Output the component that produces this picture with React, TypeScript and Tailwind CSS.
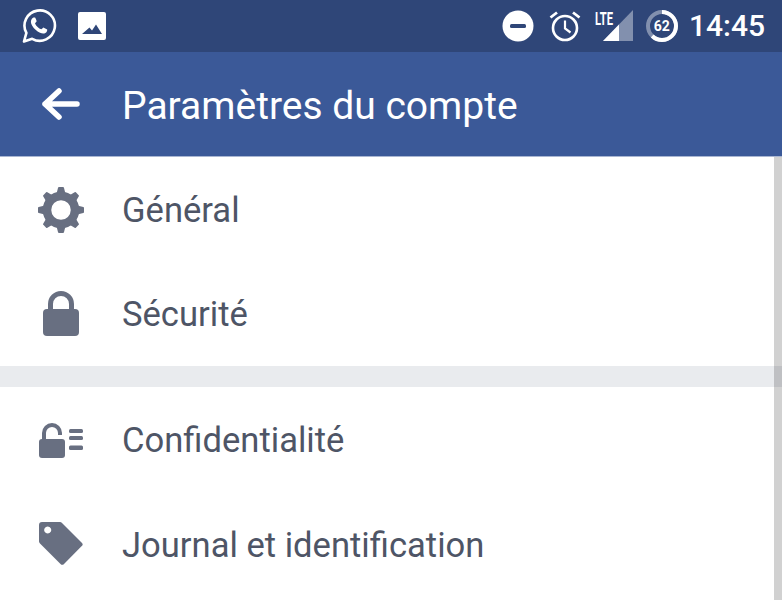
const slate = "#686f81";

function Whatsapp() {
  return (
    <svg viewBox="0 0 36 36" className="h-9 w-9" fill="none">
      <path d="M3 33.5l2.4-8.6A15.2 15.2 0 1 1 11.2 30.8z" stroke="white" strokeWidth="2.6" strokeLinejoin="round" />
      <path d="M13.2 9.6c-.8 0-1.6.3-2.3 1.2-1.4 1.8-1.3 4.4.3 7 1.8 3 4.6 5.6 7.8 7 2.7 1.1 5 .9 6.4-.6.7-.8.9-1.8.8-2.6-1.2-.9-2.6-1.7-3.9-2.2-.7.6-1.2 1.5-2 1.9-2.7-1-5-3.2-6.3-5.9.5-.8 1.3-1.4 1.7-2.1-.4-1.3-1-2.6-1.6-3.7z" fill="white" />
    </svg>
  );
}

function Picture() {
  return (
    <svg viewBox="0 0 28 28" className="h-7 w-7">
      <path fillRule="evenodd" fill="white" d="M2 0h24a2 2 0 0 1 2 2v24a2 2 0 0 1-2 2H2a2 2 0 0 1-2-2V2a2 2 0 0 1 2-2zM4 22h20l-6-9.5-4 6-2.5-3z" />
    </svg>
  );
}

function Dnd() {
  return (
    <svg viewBox="0 0 32 32" className="h-8 w-8">
      <circle cx="16" cy="16" r="15.5" fill="white" />
      <rect x="8" y="14" width="16" height="4" rx="1.5" fill="#2f4678" />
    </svg>
  );
}

function Alarm() {
  return (
    <svg viewBox="0 0 32 32" className="h-8 w-8" fill="none" stroke="white">
      <circle cx="16" cy="18" r="12" strokeWidth="2.6" />
      <path d="M16 10.5v8l5.5 4" strokeWidth="2.2" />
      <path d="M1.5 7.5L8 2.5M30.500 7.500L24 2.500" strokeWidth="2.8" />
    </svg>
  );
}

function Signal() {
  return (
    <div className="relative h-8 w-[30px]">
      <svg viewBox="0 0 30 32" className="h-8 w-[30px]">
        <path d="M30 0v31H0z" fill="white" fillOpacity="0.4" />
        <path d="M16 14.5V31H0z" fill="white" />
      </svg>
      <span className="absolute top-0 left-[-8px] origin-left scale-x-[0.62] text-[18px] leading-none font-bold text-white">
        LTE
      </span>
    </div>
  );
}

function Battery() {
  return (
    <div className="relative flex h-8 w-8 items-center justify-center">
      <svg viewBox="0 0 32 32" className="absolute inset-0 h-8 w-8" fill="none" strokeWidth="4">
        <circle cx="16" cy="16" r="14" stroke="white" strokeOpacity="0.4" />
        <circle cx="16" cy="16" r="14" stroke="white" strokeDasharray="54.5 88" transform="rotate(-90 16 16)" />
      </svg>
      <span className="relative text-[14px] leading-none font-bold text-white">62</span>
    </div>
  );
}

function Back() {
  return (
    <svg viewBox="0 0 40 32" className="h-8 w-10" fill="none" stroke="white" strokeWidth="5.5" strokeLinecap="round" strokeLinejoin="round">
      <path d="M36 16H4M18 3L4 16l14 13" />
    </svg>
  );
}

function Gear() {
  const teeth = [0, 45, 90, 135, 180, 225, 270, 315];
  return (
    <svg viewBox="0 0 48 48" className="h-12 w-12">
      {teeth.map((a) => (
        <path
          key={a}
          d="M19.500 12L22 2h4l2.500 10z"
          fill={slate}
          stroke={slate}
          strokeWidth="2"
          strokeLinejoin="round"
          transform={`rotate(${a} 24 24)`}
        />
      ))}
      <circle cx="24" cy="24" r="14" fill="none" stroke={slate} strokeWidth="8.500" />
    </svg>
  );
}

function Lock() {
  return (
    <svg viewBox="0 0 36 45" className="h-[45px] w-9">
      <path d="M7.500 20v-7a10.500 10.500 0 0 1 21 0v7" fill="none" stroke={slate} strokeWidth="5" />
      <rect x="0" y="18" width="36" height="27" rx="4" fill={slate} />
    </svg>
  );
}

function PrivacyLock() {
  return (
    <svg viewBox="0 0 44 35" className="h-[35px] w-11">
      <path d="M5 17v-7a8 8 0 0 1 16 0v2" fill="none" stroke={slate} strokeWidth="4" />
      <rect x="0" y="16" width="26" height="19" rx="3" fill={slate} />
      <rect x="30" y="6" width="14" height="4" rx="1.500" fill={slate} />
      <rect x="30" y="13" width="14" height="4" rx="1.500" fill={slate} />
      <rect x="30" y="22.500" width="14" height="4.500" rx="1.500" fill={slate} />
    </svg>
  );
}

function Tag() {
  return (
    <svg viewBox="0 0 44 43" className="h-[43px] w-11">
      <path
        fillRule="evenodd"
        fill={slate}
        d="M3 0h18a3 3 0 0 1 2 1l20 20a2 2 0 0 1 0 2.800L25 42a2.500 2.500 0 0 1-3.500 0L1 21.500a3 3 0 0 1-1-2V3a3 3 0 0 1 3-3zM8.700 4.500a3.500 3.500 0 1 0 .01 0z"
      />
    </svg>
  );
}

function Row({ icon, label, className }: { icon: React.ReactNode; label: string; className: string }) {
  return (
    <div className={`flex items-center ${className}`}>
      <div className="flex w-[122px] shrink-0 items-center justify-center">{icon}</div>
      <span className="text-[34.6px] leading-10 text-[#4e5566]">{label}</span>
    </div>
  );
}

export default function App() {
  return (
    <div className="relative h-[600px] w-[782px] overflow-hidden bg-white font-['Roboto',sans-serif]">
      <div className="flex h-[52px] items-center justify-between bg-[#2f4678] pr-[17px] pl-[21px]">
        <div className="flex items-center gap-[21px]">
          <Whatsapp />
          <Picture />
        </div>
        <div className="flex items-center">
          <Dnd />
          <div className="ml-[15px]">
            <Alarm />
          </div>
          <div className="ml-[22px]">
            <Signal />
          </div>
          <div className="ml-[13px]">
            <Battery />
          </div>
          <span className="ml-[11px] text-[30px] leading-none font-medium text-white">14:45</span>
        </div>
      </div>
      <div className="flex h-[104px] items-center bg-[#3b5998]">
        <div className="flex w-[122px] shrink-0 justify-center">
          <Back />
        </div>
        <span className="pt-1 text-[39px] leading-none text-white">Paramètres du compte</span>
      </div>
      <div className="h-px bg-[#a9b6d2]" />
      <Row icon={<Gear />} label="Général" className="h-[105px]" />
      <Row icon={<div className="-mt-0.5"><Lock /></div>} label="Sécurité" className="h-[104px]" />
      <div className="h-[21px] bg-[#e9ebee]" />
      <Row icon={<PrivacyLock />} label="Confidentialité" className="h-[106px]" />
      <Row icon={<div className="-mt-[3px]"><Tag /></div>} label="Journal et identification" className="h-[104px]" />
      {/* scrollbar overlay */}
      <div className="absolute top-[157px] right-0 bottom-0 w-2 bg-black/[0.18]" />
    </div>
  );
}
